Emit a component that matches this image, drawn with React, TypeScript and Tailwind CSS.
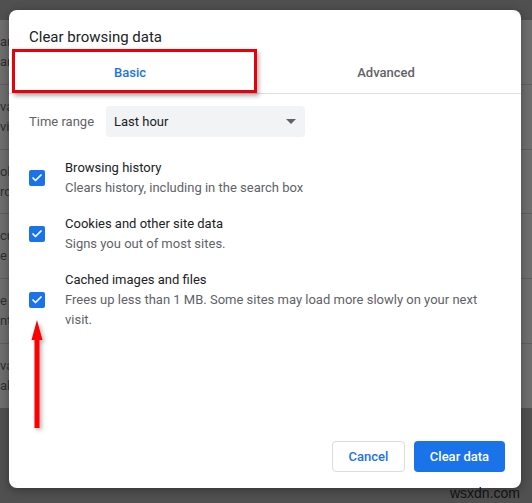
import { Check } from "lucide-react";

const bgRows = [
  ["ar", "ar"],
  ["va", "vie"],
  ["ok", "rd"],
  ["cu", "e"],
  ["e s", "nt"],
  ["va", "al"],
];

const items = [
  { title: "Browsing history", desc: "Clears history, including in the search box" },
  { title: "Cookies and other site data", desc: "Signs you out of most sites." },
  {
    title: "Cached images and files",
    desc: "Frees up less than 1 MB. Some sites may load more slowly on your next visit.",
  },
];

const Checkbox = () => (
  <div className="w-4 h-4 rounded-[2px] bg-[#1a73e8] flex items-center justify-center shrink-0">
    <Check className="w-3 h-3 text-white" strokeWidth={3.5} />
  </div>
);

export default function App() {
  return (
    <div className="relative w-[532px] h-[503px] overflow-hidden bg-[#505050] font-['Roboto',sans-serif]">
      {/* dimmed settings page behind the dialog */}
      <div className="pt-[20px]">
        <div className="h-[388px] bg-[#6e6e6e] flex flex-col">
          {bgRows.map((r, i) => (
            <div
              key={i}
              className={`flex-1 flex flex-col justify-center gap-[2px] text-[13px] leading-[18px] text-[#2e2e2e] ${
                i < bgRows.length - 1 ? "border-b border-[#5e5e5e]" : ""
              }`}
            >
              <span>{r[0]}</span>
              <span>{r[1]}</span>
            </div>
          ))}
        </div>
      </div>

      {/* dialog */}
      <div className="absolute left-[9px] top-[10px] w-[512px] h-[478px] bg-white rounded-[8px] shadow-[0_2px_10px_rgba(0,0,0,0.35)] flex flex-col">
        <h1 className="pt-[17px] px-5 text-[15px] leading-[20px] text-[#202124]">Clear browsing data</h1>

        <div className="mt-[4px] border-b border-[#e0e0e0]">
          <div className="flex -ml-[7px] h-[42px] pt-[2px] text-[13px] font-medium">
            <div className="w-[256px] flex items-center justify-center text-[#1a73e8]">Basic</div>
            <div className="w-[256px] flex items-center justify-center text-[#5f6368]">Advanced</div>
          </div>
        </div>

        <div className="mt-[12px] px-5 flex items-center h-[31px] text-[13px]">
          <span className="w-[77px] text-[#5f6368]">Time range</span>
          <div className="w-[199px] h-[31px] rounded-[4px] bg-[#f1f3f4] flex items-center justify-between pl-2 pr-[9px] text-[#202124]">
            <span>Last hour</span>
            <svg width="10" height="5" viewBox="0 0 10 5">
              <path d="M0 0h10L5 5z" fill="#5f6368" />
            </svg>
          </div>
        </div>

        <div className="mt-[21px] px-5 flex flex-col gap-4">
          {items.map((it) => (
            <div key={it.title} className="flex items-center gap-5 text-[13px] leading-[20px]">
              <Checkbox />
              <div className="pr-3">
                <p className="text-[#202124]">{it.title}</p>
                <p className="text-[#5f6368]">{it.desc}</p>
              </div>
            </div>
          ))}
        </div>

        <div className="mt-auto pb-4 pr-4 flex justify-end gap-[9px] text-[13px] font-medium">
          <button className="w-[73px] h-[31px] rounded-[4px] border border-[#dadce0] text-[#1a73e8] bg-white">
            Cancel
          </button>
          <button className="w-[91px] h-[31px] rounded-[4px] bg-[#1a73e8] text-white">Clear data</button>
        </div>
      </div>

      {/* annotation: red box round the Basic tab */}
      <div className="absolute left-[12px] top-[49px] w-[245px] h-[44px] border-[3px] border-[#e8000b] shadow-[2px_3px_4px_rgba(0,0,0,0.3)]" />

      {/* annotation: red arrow */}
      <svg
        className="absolute left-[31px] top-[320px] drop-shadow-[2px_2px_2px_rgba(0,0,0,0.3)]"
        width="12"
        height="108"
        viewBox="0 0 12 108"
      >
        <path d="M6 0L11.5 20H8.5V108H3.5V20H0.5Z" fill="#f00" />
      </svg>

      {/* watermark */}
      <span className="absolute right-[12px] bottom-[3px] font-['Liberation_Sans',Arial,sans-serif] text-[14px] leading-[14px] text-[#111]">
        wsxdn.com
      </span>
    </div>
  );
}
